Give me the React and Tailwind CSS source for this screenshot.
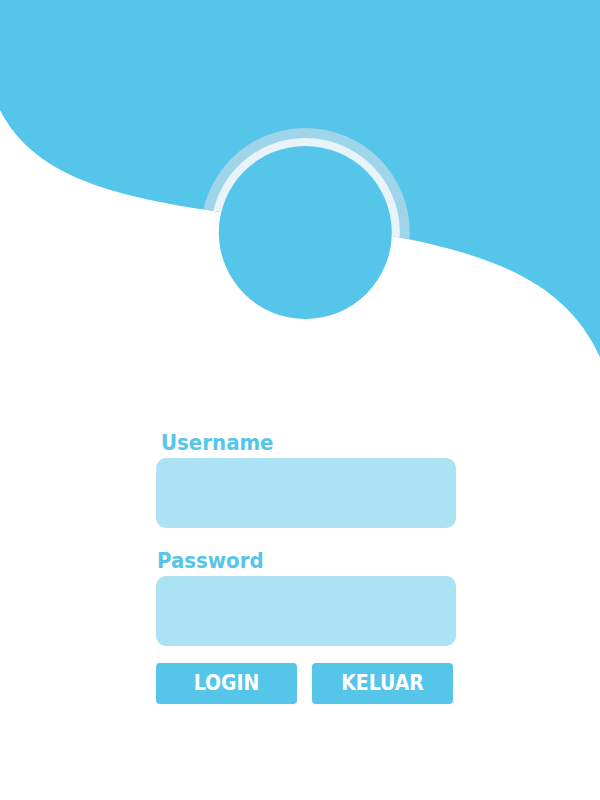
import React from 'react';

const WAVE = 'M0,0 H600 V357 C560,270 470,245 305,222 C150,205 40,190 0,110 Z';

function Header() {
    return (
        <svg width="600" height="360" viewBox="0 0 600 360" className="block">
            <defs>
                <clipPath id="wave-clip">
                    <path d={WAVE} />
                </clipPath>
            </defs>
            <path d={WAVE} fill="#56c5ea" />
            {/* halo rings only show inside the blue wave */}
            <g clipPath="url(#wave-clip)">
                <circle cx="305.3" cy="232.5" r="104.5" fill="#9fd5e9" />
                <circle cx="305.3" cy="232.5" r="94.5" fill="#e8f4fa" />
            </g>
            <circle cx="305.3" cy="232.5" r="86.5" fill="#56c5ea" />
        </svg>
    );
}

export default function App() {
    const font = { fontFamily: '"DejaVu Sans Condensed", "DejaVu Sans", Tahoma, sans-serif' };

    return (
        <div className="w-[600px] h-[800px] bg-white overflow-hidden flex flex-col">
            <Header />

            <form className="w-[300px] ml-[156px] mt-[70px] flex flex-col" style={font} onSubmit={(e) => e.preventDefault()}>
                <label className="block h-[26px] leading-[26px] text-[22px] font-bold text-[#56c5ea] pl-[5px] mb-[2px]">
                    Username
                </label>
                <input type="text" className="h-[70px] w-full rounded-[10px] bg-[#abe2f4] outline-none px-4 text-lg text-gray-700" />

                <label className="block h-[26px] leading-[26px] text-[22px] font-bold text-[#56c5ea] pl-[1px] mt-[20px] mb-[2px]">
                    Password
                </label>
                <input type="password" className="h-[70px] w-full rounded-[10px] bg-[#abe2f4] outline-none px-4 text-lg text-gray-700" />

                <div className="flex gap-[15px] mt-[17px]">
                    <button type="submit" className="w-[141px] h-[41px] leading-[41px] rounded-[4px] bg-[#56c5ea] text-white text-[21px] font-bold">
                        LOGIN
                    </button>
                    <button type="button" className="w-[141px] h-[41px] leading-[41px] rounded-[4px] bg-[#56c5ea] text-white text-[21px] font-bold">
                        KELUAR
                    </button>
                </div>
            </form>
        </div>
    );
}
